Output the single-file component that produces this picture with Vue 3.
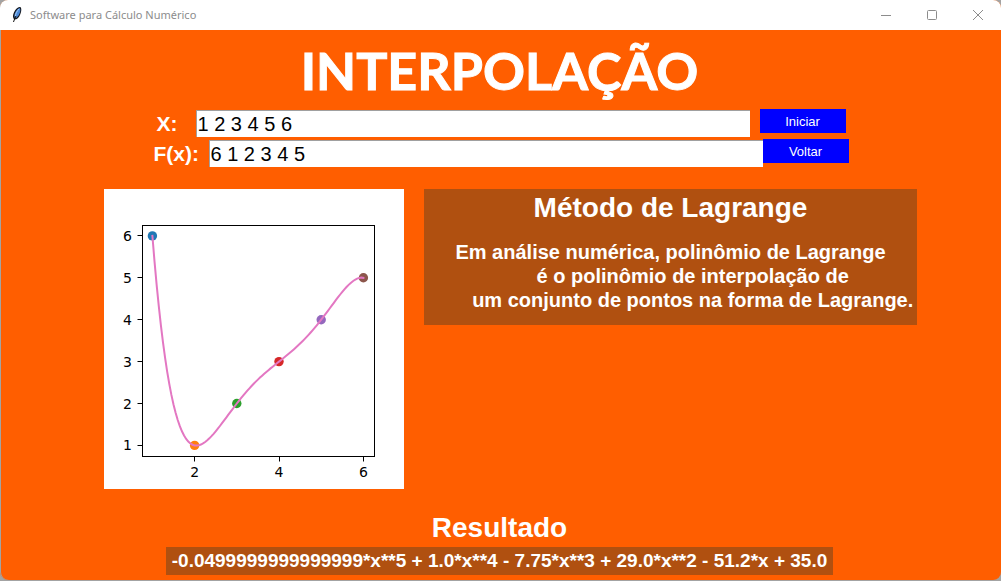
<script setup>
import { ref } from 'vue'

const xs = ref('1 2 3 4 5 6')
const ys = ref('6 1 2 3 4 5')

const poly = x => -0.05 * x ** 5 + x ** 4 - 7.75 * x ** 3 + 29 * x ** 2 - 51.2 * x + 35
const px = x => 48.4 + 42.2 * (x - 1)
const py = y => 256.4 - 41.9 * (y - 1)

const points = [
  { x: 1, y: 6, color: '#1f77b4' },
  { x: 2, y: 1, color: '#ff7f0e' },
  { x: 3, y: 2, color: '#2ca02c' },
  { x: 4, y: 3, color: '#d62728' },
  { x: 5, y: 4, color: '#9467bd' },
  { x: 6, y: 5, color: '#8c564b' },
]
const curve = Array.from({ length: 101 }, (_, i) => {
  const x = 1 + i / 20
  return `${px(x).toFixed(2)},${py(poly(x)).toFixed(2)}`
}).join(' ')
const xTicks = [2, 4, 6]
const yTicks = [1, 2, 3, 4, 5, 6]
const crisp = v => Math.floor(v) + 0.5

const description = [
  'Em análise numérica, polinômio de Lagrange',
  '        é o polinômio de interpolação de',
  '        um conjunto de pontos na forma de Lagrange.',
].join('\n')
</script>

<template>
  <div class="desktop">
    <div class="window">
      <header class="titlebar">
        <svg class="feather" width="12" height="18" viewBox="0 0 12 18" aria-hidden="true">
          <path d="M9 1 C11 1.5 10.5 6 9 9 C8 11.5 6 13.5 3.5 13.5 C1 11.5 2 7.5 4 4.5 C5.5 2.5 7 1 9 1Z" fill="#15181f" />
          <path d="M8.7 2 C10 3.5 9 7 8 8.7 C7 10.5 5.5 12 4 12.3 C2.8 10.5 3.5 7.5 5 5.2 C6.2 3.5 7.4 2.3 8.7 2Z" fill="#4a88d8" />
          <path d="M8 3 C6 5 4.8 7.5 4.3 10" stroke="#a4cbf2" stroke-width="1" fill="none" />
          <path d="M5 10 C4 12 3 14 2.5 16" stroke="#111" stroke-width="1" fill="none" />
        </svg>
        <span class="caption">Software para Cálculo Numérico</span>
        <div class="controls">
          <button type="button" aria-label="Minimizar">
            <svg width="12" height="12" viewBox="0 0 12 12"><path d="M1 6.5H11" /></svg>
          </button>
          <button type="button" aria-label="Maximizar">
            <svg width="12" height="12" viewBox="0 0 12 12"><rect x="1.5" y="1.5" width="9" height="9" rx="1" /></svg>
          </button>
          <button type="button" aria-label="Fechar">
            <svg width="12" height="12" viewBox="0 0 12 12"><path d="M1 1L11 11M11 1L1 11" /></svg>
          </button>
        </div>
      </header>

      <main>
        <h1>INTERPOLAÇÃO</h1>

        <form @submit.prevent>
          <div class="row">
            <label for="x" class="short">X:</label>
            <input id="x" v-model="xs" type="text" />
            <button type="submit" class="apart">Iniciar</button>
          </div>
          <div class="row">
            <label for="fx" class="long">F(x):</label>
            <input id="fx" v-model="ys" type="text" />
            <button type="button">Voltar</button>
          </div>
        </form>

        <div class="body">
          <svg class="chart" width="300" height="300" viewBox="0 0 300 300" role="img" aria-label="Gráfico">
            <g v-for="t in xTicks" :key="'x' + t">
              <path class="axis" :d="`M${crisp(px(t))} 267.5v5`" />
              <text :x="px(t)" y="288" text-anchor="middle">{{ t }}</text>
            </g>
            <g v-for="t in yTicks" :key="'y' + t">
              <path class="axis" :d="`M38.5 ${crisp(py(t))}h-5`" />
              <text x="28" :y="py(t) + 5" text-anchor="end">{{ t }}</text>
            </g>
            <circle v-for="p in points" :key="p.x" :cx="px(p.x)" :cy="py(p.y)" r="4.7" :fill="p.color" />
            <polyline :points="curve" />
            <rect class="axis" x="38.5" y="36.5" width="232" height="231" />
          </svg>
          <section class="panel">
            <h2>Método de Lagrange</h2>
            <p>{{ description }}</p>
          </section>
        </div>

        <section class="result">
          <h2>Resultado</h2>
          <output>-0.0499999999999999*x**5 + 1.0*x**4 - 7.75*x**3 + 29.0*x**2 - 51.2*x + 35.0</output>
        </section>
      </main>
    </div>
  </div>
</template>

<style>
body {
  margin: 0;
}
</style>

<style scoped>
.desktop {
  box-sizing: border-box;
  min-height: 100vh;
  padding-bottom: 1px;
  display: flex;
  background: #a3a3a3;
  font-family: "Liberation Sans", Arial, sans-serif;
}
.window {
  flex: 1;
  min-width: 0;
  border-radius: 8px;
  overflow: hidden;
  background: #ff5e00;
  box-shadow: inset 1px 0 #a3a3a3;
}
.titlebar {
  display: flex;
  align-items: center;
  height: 30px;
  padding-left: 11px;
  background: #fff;
}
.caption {
  margin-left: 7px;
  font: 11px/16px "Noto Sans", "Open Sans", sans-serif;
  color: #8c8c8c;
}
.controls {
  display: flex;
  margin-left: auto;
}
.controls button {
  width: 46px;
  height: 28px;
  padding: 0;
  border: 0;
  background: none;
  line-height: 0;
}
.controls svg {
  fill: none;
  stroke: #8c8c8c;
}
main {
  padding-right: 2px;
}
h1 {
  margin: 0;
  padding-top: 8px;
  font: bold 52px/64px Lato, Carlito, sans-serif;
  color: #fff;
  text-align: center;
  -webkit-text-stroke: 1px #fff;
}
form {
  display: flex;
  flex-direction: column;
  gap: 2px;
  padding-top: 7px;
}
.row {
  display: flex;
  justify-content: center;
  align-items: flex-start;
  height: 28px;
}
label {
  box-sizing: border-box;
  padding-left: 3px;
  font-size: 21px;
  font-weight: bold;
  line-height: 30px;
  color: #fff;
}
.short {
  width: 42px;
}
.long {
  width: 58px;
}
.row input {
  box-sizing: border-box;
  width: 554px;
  min-width: 0;
  height: 27px;
  margin: 1px 0 0;
  padding: 0 1px;
  border: 0 solid #a0a0a0;
  border-width: 1px 0 0 1px;
  border-radius: 0;
  background: #fff;
  font: 20px "Liberation Sans", Arial, sans-serif;
  color: #000;
}
.row button {
  width: 86px;
  height: 24px;
  padding: 0;
  border: 0;
  background: #0000ff;
  font: 13px "Liberation Sans", Arial, sans-serif;
  color: #fff;
}
.row .apart {
  margin-left: 10px;
}
.body {
  display: flex;
  justify-content: center;
  align-items: flex-start;
  gap: 20px;
  padding: 22px 0 0 22px;
}
.chart {
  flex: none;
  background: #fff;
}
.chart text {
  font: 14px "DejaVu Sans", sans-serif;
  fill: #000;
}
.axis {
  fill: none;
  stroke: #000;
}
polyline {
  fill: none;
  stroke: #e377c2;
  stroke-width: 2;
  stroke-linecap: square;
}
.panel {
  box-sizing: border-box;
  padding: 2px 4px 13px;
  background: #b05010;
  color: #fff;
  text-align: center;
}
h2 {
  margin: 0;
  font-size: 28px;
  font-weight: bold;
  line-height: 34px;
  color: #fff;
}
.panel p {
  margin: 15px 0 0;
  font-size: 20px;
  font-weight: bold;
  line-height: 24px;
  white-space: pre;
}
.result {
  display: flex;
  flex-direction: column;
  align-items: center;
  padding-top: 22px;
}
output {
  margin-top: 2px;
  padding: 0 6px;
  background: #b05010;
  font-size: 19px;
  font-weight: bold;
  line-height: 28px;
  color: #fff;
}
</style>
